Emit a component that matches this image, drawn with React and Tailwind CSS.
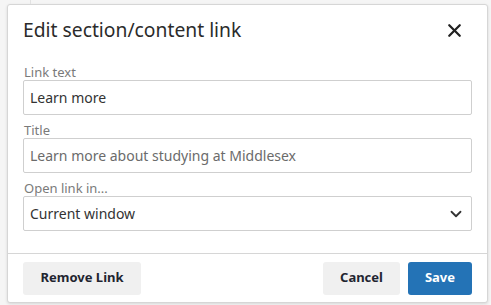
import { X, ChevronDown } from 'lucide-react'

function Field({ label, value, muted, select }) {
  return (
    <div className="flex flex-col">
      <label className="text-[13px] leading-[16px] text-[#7a7a7a] pl-px">{label}</label>
      <div className="h-[35px] border border-[#cfcfcf] rounded-[2px] flex items-center justify-between pl-[6px] pr-[6px] bg-white">
        <span className={`text-[14px] ${muted ? 'text-[#6b6b6b]' : 'text-[#333]'}`}>{value}</span>
        {select && <ChevronDown size={18} strokeWidth={2.4} className="text-[#333]" />}
      </div>
    </div>
  )
}

export default function App() {
  return (
    <div
      className="w-[491px] h-[305px] bg-[#f5f5f5] pt-[4px] pl-[7px] relative overflow-hidden"
      style={{ fontFamily: '"Noto Sans", "Open Sans", sans-serif' }}
    >
      <div className="absolute left-[30px] top-0 h-[4px] w-px bg-[#e2e2e2]" />
      <div className="w-[481px] h-[299px] bg-white border border-[#d6d6d6] rounded-[3px] shadow-[0_1px_3px_rgba(0,0,0,0.12)] flex flex-col">
        {/* Header */}
        <div className="flex items-center justify-between pl-[15px] pr-[22px] pt-[11px] pb-[11px]">
          <h2 className="text-[19.3px] leading-[28px] text-[#2b2b2b]">Edit section/content link</h2>
          <X size={21} strokeWidth={2.6} className="text-[#222]" />
        </div>

        {/* Body */}
        <div className="flex flex-col gap-[7px] px-[15px] pt-[9px] flex-1">
          <Field label="Link text" value="Learn more" />
          <Field label="Title" value="Learn more about studying at Middlesex" muted />
          <Field label="Open link in..." value="Current window" select />
        </div>

        {/* Footer */}
        <div className="border-t border-[#d6d6d6] flex items-center justify-between px-[15px] h-[49px]">
          <button className="h-[33px] w-[118px] rounded-[3px] bg-[#f0f0f0] text-[13px] font-bold text-[#1f2530]">
            Remove Link
          </button>
          <div className="flex gap-[8px]">
            <button className="h-[33px] w-[77px] rounded-[3px] bg-[#f0f0f0] text-[13px] font-bold text-[#1f2530]">
              Cancel
            </button>
            <button className="h-[33px] w-[64px] rounded-[3px] bg-[#2473b6] text-[13px] font-bold text-white">
              Save
            </button>
          </div>
        </div>
      </div>
    </div>
  )
}
